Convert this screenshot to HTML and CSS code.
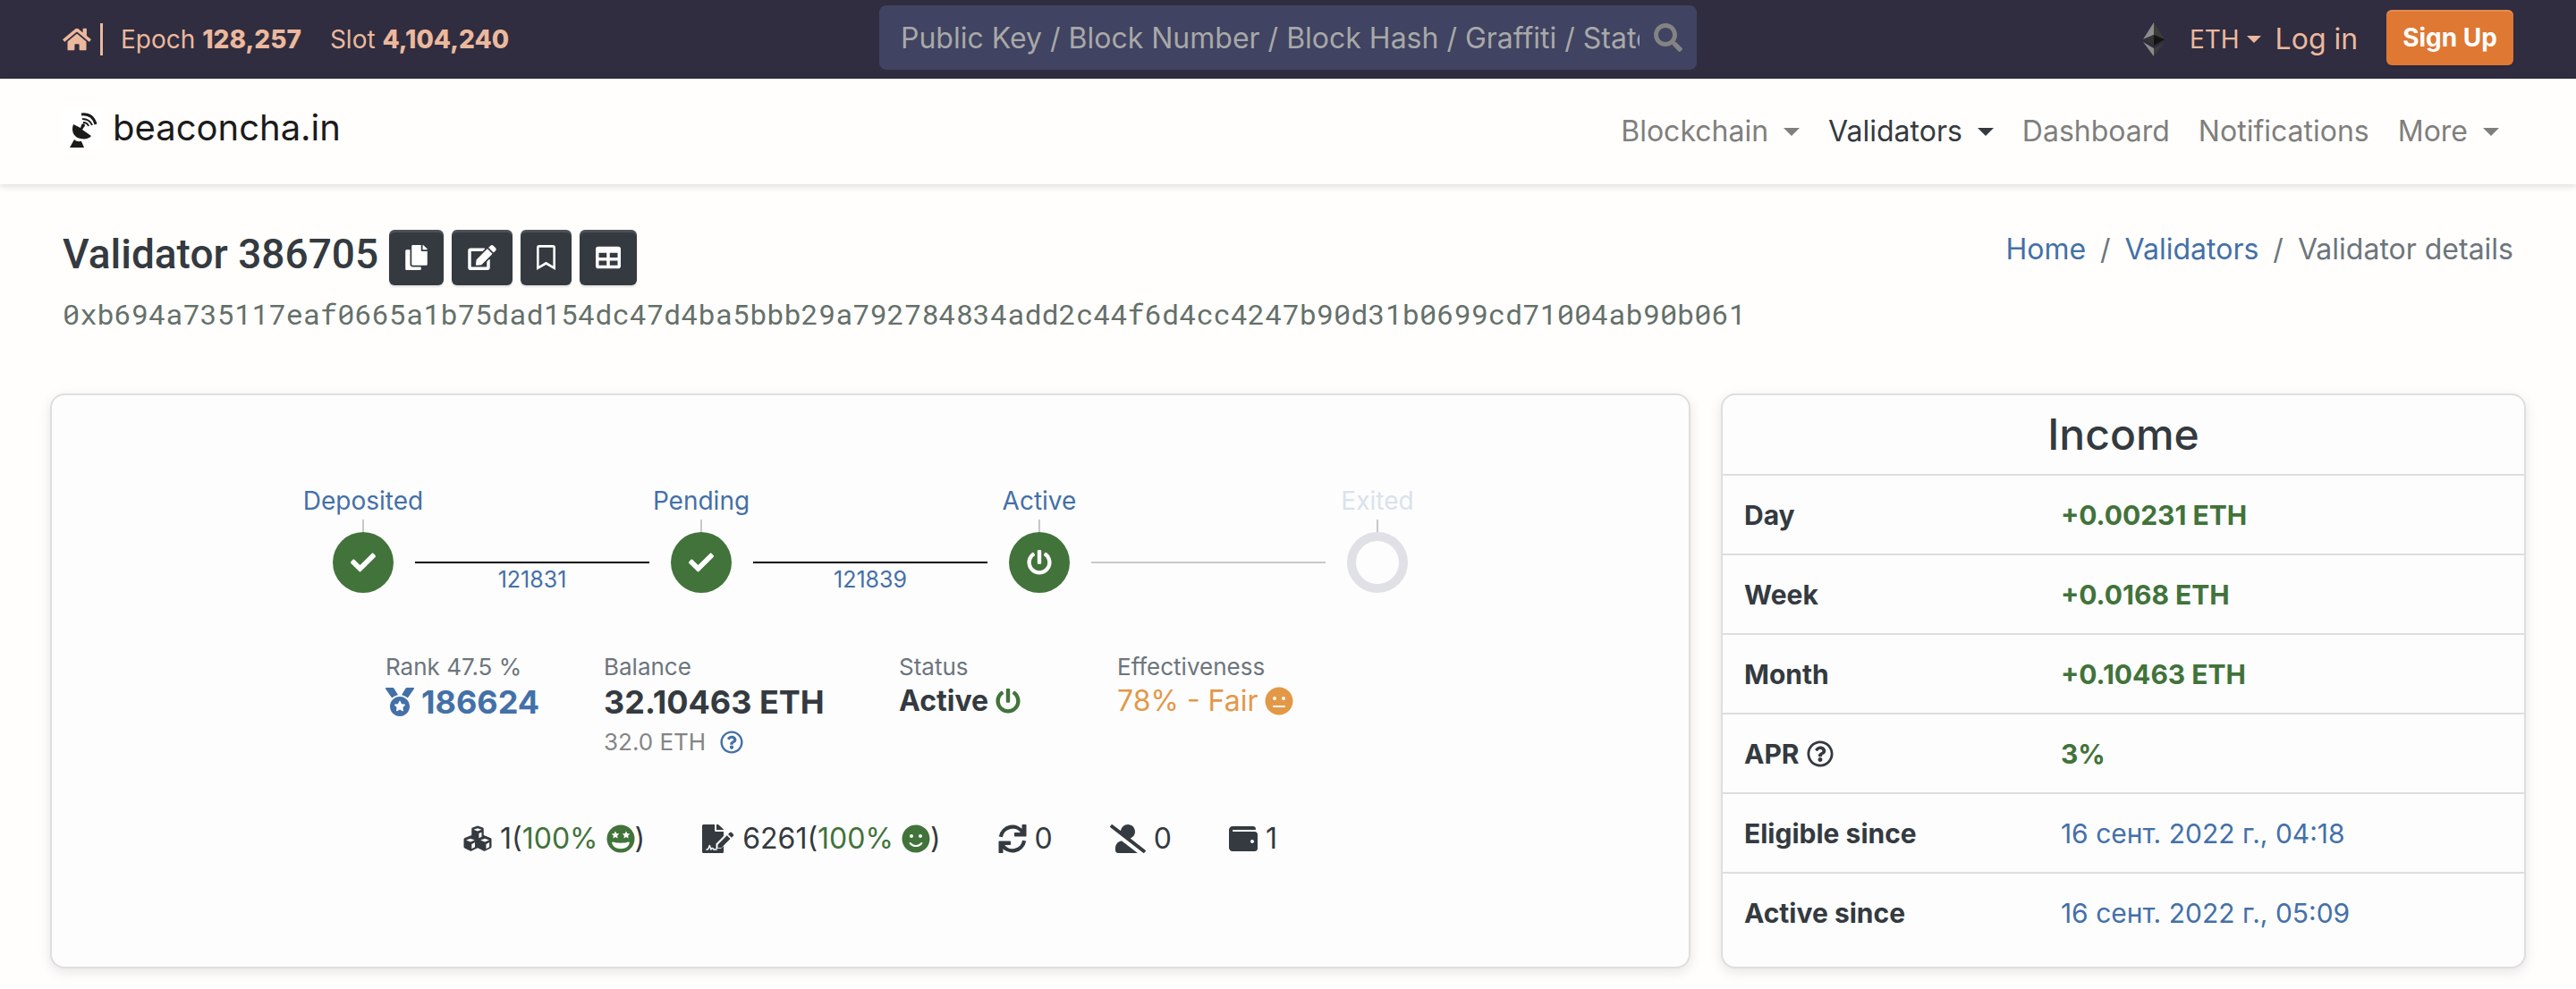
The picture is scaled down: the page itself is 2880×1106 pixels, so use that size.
FILE: index.html
```html
<!DOCTYPE html>
<html lang="en">
<head>
<meta charset="utf-8">
<title>Validator 386705 - beaconcha.in</title>
<meta name="viewport" content="width=device-width, initial-scale=1">
<link rel="stylesheet" href="styles.css">
</head>
<body>
<svg class="sprite" aria-hidden="true">
  <symbol id="i-home" viewBox="0 0 576 512"><path d="M280.37 148.26L96 300.11V464a16 16 0 0 0 16 16l112.06-.29a16 16 0 0 0 15.92-16V368a16 16 0 0 1 16-16h64a16 16 0 0 1 16 16v95.64a16 16 0 0 0 16 16.05L464 480a16 16 0 0 0 16-16V300L295.67 148.26a12.19 12.19 0 0 0-15.3 0zM571.6 251.47L488 182.56V44.05a12 12 0 0 0-12-12h-56a12 12 0 0 0-12 12v72.61L318.47 43a48 48 0 0 0-61 0L4.34 251.47a12 12 0 0 0-1.6 16.9l25.5 31A12 12 0 0 0 45.15 301l235.22-193.74a12.19 12.19 0 0 1 15.3 0L530.9 301a12 12 0 0 0 16.9-1.6l25.5-31a12 12 0 0 0-1.7-16.93z"/></symbol>
  <symbol id="i-search" viewBox="0 0 512 512"><path d="M505 442.7L405.3 343c-4.5-4.5-10.6-7-17-7H372c27.6-35.3 44-79.7 44-128C416 93.1 322.9 0 208 0S0 93.1 0 208s93.1 208 208 208c48.3 0 92.7-16.4 128-44v16.3c0 6.4 2.5 12.5 7 17l99.7 99.7c9.4 9.4 24.6 9.4 33.9 0l28.3-28.3c9.4-9.4 9.4-24.6.1-34zM208 336c-70.7 0-128-57.2-128-128 0-70.7 57.2-128 128-128 70.7 0 128 57.2 128 128 0 70.7-57.2 128-128 128z"/></symbol>
  <symbol id="i-copy" viewBox="0 0 448 512"><path d="M320 448v40c0 13.255-10.745 24-24 24H24c-13.255 0-24-10.745-24-24V120c0-13.255 10.745-24 24-24h72v296c0 30.879 25.121 56 56 56h168zm0-344V0H152c-13.255 0-24 10.745-24 24v368c0 13.255 10.745 24 24 24h272c13.255 0 24-10.745 24-24V128H344c-13.2 0-24-10.8-24-24zm120.971-31.029L375.029 7.029A24 24 0 0 0 358.059 0H352v96h96v-6.059a24 24 0 0 0-7.029-16.97z"/></symbol>
  <symbol id="i-edit" viewBox="0 0 576 512"><path d="M402.6 83.2l90.2 90.2c3.8 3.8 3.8 10 0 13.8L274.4 405.6l-92.8 10.3c-12.4 1.4-22.9-9.1-21.5-21.5l10.3-92.8L388.8 83.2c3.8-3.8 10-3.8 13.8 0zm162-22.9l-48.8-48.8c-15.2-15.2-39.9-15.2-55.2 0l-35.4 35.4c-3.8 3.8-3.8 10 0 13.8l90.2 90.2c3.8 3.8 10 3.8 13.8 0l35.4-35.4c15.2-15.3 15.2-40 0-55.2zM384 346.2V448H64V128h229.8c3.2 0 6.2-1.3 8.5-3.5l40-40c7.6-7.6 2.2-20.5-8.5-20.5H48C21.5 64 0 85.5 0 112v352c0 26.5 21.5 48 48 48h352c26.5 0 48-21.5 48-48V306.2c0-10.7-12.9-16-20.5-8.5l-40 40c-2.2 2.3-3.5 5.3-3.5 8.5z"/></symbol>
  <symbol id="i-bookmark" viewBox="0 0 384 512"><path d="M336 0H48C21.49 0 0 21.49 0 48v464l192-112 192 112V48c0-26.51-21.49-48-48-48zm0 428.43l-144-84-144 84V54a6 6 0 0 1 6-6h276c3.314 0 6 2.683 6 5.996V428.43z"/></symbol>
  <symbol id="i-table" viewBox="0 0 512 512"><path d="M464 32H48C21.49 32 0 53.49 0 80v352c0 26.51 21.49 48 48 48h416c26.51 0 48-21.49 48-48V80c0-26.51-21.49-48-48-48zM224 416H64v-96h160v96zm0-160H64v-96h160v96zm224 160H288v-96h160v96zm0-160H288v-96h160v96z"/></symbol>
  <symbol id="i-check" viewBox="0 0 512 512"><path d="M173.898 439.404l-166.4-166.4c-9.997-9.997-9.997-26.206 0-36.204l36.203-36.204c9.997-9.998 26.207-9.998 36.204 0L192 312.69 432.095 72.596c9.997-9.997 26.207-9.997 36.204 0l36.203 36.204c9.997 9.997 9.997 26.206 0 36.204l-294.4 294.401c-9.998 9.997-26.207 9.997-36.204-.001z"/></symbol>
  <symbol id="i-power" viewBox="0 0 512 512"><path d="M400 54.1c63 45 104 118.6 104 201.9 0 136.8-110.8 247.7-247.5 248C120 504.3 8.2 393 8 256.4 7.9 173.1 48.9 99.3 111.8 54.2c11.7-8.3 28-4.8 35 7.7L162.6 90c5.9 10.5 3.1 23.8-6.6 31-41.5 30.8-68 79.6-68 134.9-.1 92.3 74.5 168.1 168 168.1 91.6 0 168.6-74.2 168-169.1-.3-51.8-24.7-101.8-68.1-134-9.7-7.2-12.4-20.5-6.5-30.9l15.8-28.1c7-12.4 23.2-16.1 34.8-7.8zM296 264V24c0-13.3-10.7-24-24-24h-32c-13.3 0-24 10.7-24 24v240c0 13.3 10.7 24 24 24h32c13.3 0 24-10.7 24-24z"/></symbol>
  <symbol id="i-medal" viewBox="0 0 512 512"><path d="M223.75 130.75L154.62 15.54A31.997 31.997 0 0 0 127.18 0H16.03C3.08 0-4.5 14.57 2.92 25.18l111.27 158.96c29.72-27.77 67.52-46.83 109.56-53.39zM495.97 0H384.82c-11.24 0-21.66 5.9-27.44 15.54l-69.13 115.21c42.04 6.56 79.84 25.62 109.56 53.38L509.08 25.18C516.5 14.57 508.92 0 495.97 0zM256 160c-97.2 0-176 78.8-176 176s78.8 176 176 176 176-78.8 176-176-78.8-176-176-176zm92.52 157.26l-37.93 36.96 8.97 52.22c1.6 9.36-8.26 16.51-16.65 12.09L256 393.88l-46.9 24.65c-8.4 4.45-18.25-2.74-16.65-12.09l8.97-52.22-37.93-36.96c-6.82-6.64-3.05-18.23 6.35-19.59l52.43-7.64 23.43-47.52c2.11-4.28 6.19-6.39 10.28-6.39 4.11 0 8.22 2.14 10.33 6.39l23.43 47.52 52.43 7.64c9.4 1.36 13.17 12.95 6.35 19.59z"/></symbol>
  <symbol id="i-question" viewBox="0 0 512 512"><path d="M256 8C119.043 8 8 119.083 8 256c0 136.997 111.043 248 248 248s248-111.003 248-248C504 119.083 392.957 8 256 8zm0 448c-110.532 0-200-89.431-200-200 0-110.495 89.472-200 200-200 110.491 0 200 89.471 200 200 0 110.53-89.431 200-200 200zm107.244-255.2c0 67.052-72.421 68.084-72.421 92.863V300c0 6.627-5.373 12-12 12h-45.647c-6.627 0-12-5.373-12-12v-8.659c0-35.745 27.1-50.034 47.579-61.516 17.561-9.845 28.324-16.541 28.324-29.579 0-17.246-21.999-28.693-39.784-28.693-23.189 0-33.894 10.977-48.942 29.969-4.057 5.12-11.46 6.071-16.666 2.124l-27.824-21.098c-5.107-3.872-6.251-11.066-2.644-16.363C184.846 131.491 214.94 112 261.794 112c49.071 0 101.45 38.304 101.45 88.8zM298 368c0 23.159-18.841 42-42 42s-42-18.841-42-42 18.841-42 42-42 42 18.841 42 42z"/></symbol>
  <symbol id="i-meh" viewBox="0 0 496 512"><path d="M248 8C111 8 0 119 0 256s111 248 248 248 248-111 248-248S385 8 248 8zm-80 168c17.7 0 32 14.3 32 32s-14.3 32-32 32-32-14.3-32-32 14.3-32 32-32zm176 192H152c-21.2 0-21.2-32 0-32h192c21.2 0 21.2 32 0 32zm-16-128c-17.7 0-32-14.3-32-32s14.3-32 32-32 32 14.3 32 32-14.3 32-32 32z"/></symbol>
  <symbol id="i-smile" viewBox="0 0 496 512"><path d="M248 8C111 8 0 119 0 256s111 248 248 248 248-111 248-248S385 8 248 8zm80 168c17.7 0 32 14.3 32 32s-14.3 32-32 32-32-14.3-32-32 14.3-32 32-32zm-160 0c17.7 0 32 14.3 32 32s-14.3 32-32 32-32-14.3-32-32 14.3-32 32-32zm194.8 170.2C334.3 380.4 292.5 400 248 400s-86.3-19.6-114.8-53.8c-13.6-16.3 11-36.7 24.6-20.5 22.4 26.9 55.2 42.2 90.2 42.2s67.8-15.4 90.2-42.2c13.4-16.2 38.1 4.2 24.6 20.5z"/></symbol>
  <symbol id="i-stars" viewBox="0 0 496 512"><circle cx="248" cy="256" r="248"/><g fill="#fdfdfd"><path d="M152 118l21 42 47 7-34 33 8 47-42-22-42 22 8-47-34-33 47-7zM344 118l21 42 47 7-34 33 8 47-42-22-42 22 8-47-34-33 47-7z"/><path d="M109 312c-10-3-19 6-18 16 9 64 79 108 157 108s148-44 157-108c1-10-8-19-18-16-38 12-87 19-139 19s-101-7-139-19z"/></g></symbol>
  <symbol id="i-cubes" viewBox="0 0 512 512"><path fill-rule="evenodd" d="M256 22l92 34q16 6 16 22v114l120 46q20 8 20 26v136q0 16-15 23l-98 48q-14 6-28 0l-107-52-107 52q-14 6-28 0l-98-48q-15-7-15-23V264q0-18 20-26l120-46V78q0-16 16-22zM256 66l-72 26 72 29 72-29zM278 160v82l50-22v-80zM127 250l-78 30 78 32 78-32zM149 350v84l59-29v-84zM385 250l-78 30 78 32 78-32zM407 350v84l59-29v-84z"/></symbol>
  <symbol id="i-sign" viewBox="0 0 576 512"><path d="M24 0h200v104q0 24 24 24h136v80L248 344v88h88l48-48v104q0 24-24 24H24q-24 0-24-24V24Q0 0 24 0z"/><path d="M256 0v96h128v-8L292 4q-6-4-12-4zM280 360l164-164 60 60-164 164h-60zM464 176l32-32q16-14 32 0l30 30q14 16 0 30l-32 32z"/><path d="M70 448h20c15 0 18-8 23-22l20-50 26 72c4-30 30-30 42-8 5 8 14 8 24 8h44" fill="none" stroke="#fdfdfd" stroke-width="24" stroke-linejoin="round"/></symbol>
  <symbol id="i-sync" viewBox="0 0 512 512"><path d="M46 222A214 214 0 0 1 440 146M466 290A214 214 0 0 1 72 366" fill="none" stroke="currentColor" stroke-width="68"/><path d="M436 0h56q12 0 12 12v192q0 12-12 12H300q-12 0-12-12v-48q0-12 12-12h124V12q0-12 12-12zM76 512H20q-12 0-12-12V308q0-12 12-12h192q12 0 12 12v48q0 12-12 12H88v132q0 12-12 12z"/></symbol>
  <symbol id="i-userslash" viewBox="0 0 640 512"><path d="M633.8 458.1L362.3 248.3C412.1 230.7 448 183.8 448 128 448 57.3 390.7 0 320 0c-67.1 0-121.5 51.8-126.9 117.4L45.5 3.4C38.5-2 28.5-.8 23 6.2L3.4 31.4c-5.4 7-4.2 17 2.8 22.4l588.4 454.7c7 5.4 17 4.2 22.5-2.8l19.6-25.3c5.4-6.8 4.1-16.9-2.9-22.3zM96 422.4V464c0 26.5 21.5 48 48 48h350.2L207.4 290.3C144.2 301.3 96 356 96 422.4z"/></symbol>
  <symbol id="i-wallet" viewBox="0 0 512 512"><path d="M461.2 128H80c-8.84 0-16-7.16-16-16s7.16-16 16-16h384c8.84 0 16-7.16 16-16 0-26.51-21.49-48-48-48H64C28.65 32 0 60.65 0 96v320c0 35.35 28.65 64 64 64h397.2c28.02 0 50.8-21.53 50.8-48V176c0-26.47-22.78-48-50.8-48zM416 336c-17.67 0-32-14.33-32-32s14.33-32 32-32 32 14.33 32 32-14.33 32-32 32z"/></symbol>
</svg>

<header>
  <div class="topbar">
    <div class="network">
      <a class="home" href="#" aria-label="Home"><svg class="icon-home"><use href="#i-home"/></svg></a>
      <a href="#">Epoch <b>128,257</b></a>
      <a href="#">Slot <b>4,104,240</b></a>
    </div>
    <form class="search" role="search">
      <input type="text" aria-label="Search" placeholder="Public Key / Block Number / Block Hash / Graffiti / State Hash / Tag">
      <button type="button" aria-label="Search"><svg class="icon"><use href="#i-search"/></svg></button>
    </form>
    <div class="account">
      <svg class="eth" viewBox="0 0 24 38"><path fill="#8c8c8c" d="M12 0L0 19l12-5z"/><path fill="#3c3c3b" d="M12 0l12 19-12-5z"/><path fill="#343434" d="M0 19l12-5v12z"/><path fill="#141414" d="M24 19l-12-5v12z"/><path fill="#8c8c8c" d="M0 22l12 7v9z"/><path fill="#3c3c3b" d="M24 22l-12 7v9z"/></svg>
      <a class="currency" href="#">ETH<span class="caret caret-sm"></span></a>
      <a class="login" href="#">Log in</a>
      <button class="signup" type="button">Sign Up</button>
    </div>
  </div>
  <nav class="navbar">
    <a class="brand" href="#">
      <svg class="brand-logo" viewBox="0 0 44 44"><rect width="44" height="44" fill="#fff"/><g fill="#1b1b1a"><path d="M12 18C9 26 13 33 20 34c5 1 10 0 12-3L22 24l2-3a2 2 0 1 0-3-2l-1 3z"/><path d="M8 44l5-9c3 3 6 2 8 2l3 7z"/></g><g fill="none" stroke="#1b1b1a" stroke-width="2"><path d="M21 7c9-1 14 4 16 11" stroke-width="3"/><path d="M22 12c6 0 9 2 11 7"/><path d="M23 16c3 0 5 1 6 4"/></g></svg>
      <span>beaconcha.in</span>
    </a>
    <div class="menu">
      <a href="#">Blockchain<span class="caret"></span></a>
      <a class="active" href="#">Validators<span class="caret"></span></a>
      <a href="#">Dashboard</a>
      <a href="#">Notifications</a>
      <a href="#">More<span class="caret"></span></a>
    </div>
  </nav>
</header>

<main>
  <div class="heading">
    <div class="title-row">
      <h1>Validator 386705</h1>
      <div class="actions">
        <button type="button" aria-label="Copy public key"><svg class="w25"><use href="#i-copy"/></svg></button>
        <button type="button" aria-label="Edit name"><svg class="w32"><use href="#i-edit"/></svg></button>
        <button type="button" aria-label="Bookmark"><svg class="w21"><use href="#i-bookmark"/></svg></button>
        <button type="button" aria-label="Add to dashboard"><svg class="w28"><use href="#i-table"/></svg></button>
      </div>
      <nav class="crumbs" aria-label="breadcrumb">
        <a href="#">Home</a><span>/</span><a href="#">Validators</a><span>/</span><span>Validator details</span>
      </nav>
    </div>
    <p class="pubkey">0xb694a735117eaf0665a1b75dad154dc47d4ba5bbb29a792784834add2c44f6d4cc4247b90d31b0699cd71004ab90b061</p>
  </div>

  <div class="cards">
    <section class="card overview">
      <div class="progress">
        <div class="step"><a href="#">Deposited</a><i class="stem"></i><span class="dot"><svg class="w28"><use href="#i-check"/></svg></span></div>
        <div class="link"><a href="#">121831</a></div>
        <div class="step"><a href="#">Pending</a><i class="stem"></i><span class="dot"><svg class="w28"><use href="#i-check"/></svg></span></div>
        <div class="link"><a href="#">121839</a></div>
        <div class="step"><a href="#">Active</a><i class="stem"></i><span class="dot"><svg class="w28"><use href="#i-power"/></svg></span></div>
        <div class="link idle"></div>
        <div class="step idle"><a href="#">Exited</a><i class="stem"></i><span class="dot"></span></div>
      </div>

      <div class="stats">
        <div><small>Rank 47.5 %</small><a class="value large" href="#"><svg class="icon"><use href="#i-medal"/></svg>186624</a></div>
        <div><small>Balance</small><span class="value large">32.10463 ETH</span><span class="sub">32.0 ETH<a href="#" aria-label="Effective balance"><svg class="w26"><use href="#i-question"/></svg></a></span></div>
        <div><small>Status</small><span class="value">Active<svg class="w28 good"><use href="#i-power"/></svg></span></div>
        <div><small>Effectiveness</small><span class="value fair">78% - Fair<svg class="icon"><use href="#i-meh"/></svg></span></div>
      </div>

      <div class="counts">
        <span><svg class="icon"><use href="#i-cubes"/></svg><span>1(<span class="good">100% <svg class="icon inline"><use href="#i-stars"/></svg></span>)</span></span>
        <span><svg class="w36"><use href="#i-sign"/></svg><span>6261(<span class="good">100% <svg class="icon inline"><use href="#i-smile"/></svg></span>)</span></span>
        <span><svg class="icon"><use href="#i-sync"/></svg>0</span>
        <span><svg class="w40"><use href="#i-userslash"/></svg>0</span>
        <span><svg class="icon"><use href="#i-wallet"/></svg>1</span>
      </div>
    </section>

    <section class="card income">
      <h2>Income</h2>
      <table>
        <tbody>
          <tr><th scope="row">Day</th><td><b>+0.00231 ETH</b></td></tr>
          <tr><th scope="row">Week</th><td><b>+0.0168 ETH</b></td></tr>
          <tr><th scope="row">Month</th><td><b>+0.10463 ETH</b></td></tr>
          <tr><th scope="row"><span class="apr">APR<svg class="w30"><use href="#i-question"/></svg></span></th><td><b>3%</b></td></tr>
          <tr><th scope="row">Eligible since</th><td><a href="#">16 сент. 2022 г., 04:18</a></td></tr>
          <tr><th scope="row">Active since</th><td><a href="#">16 сент. 2022 г., 05:09</a></td></tr>
        </tbody>
      </table>
    </section>
  </div>
</main>
</body>
</html>
```
FILE: styles.css
```css
:root {
  --ink: #343a40;
  --link: #4470a8;
  --good: #41733a;
  --peach: #ecb89d;
  --line: #dedede;
}

* { box-sizing: border-box; }

body {
  margin: 0;
  background: #fffefc;
  color: var(--ink);
  font: 32px/48px Inter, "Liberation Sans", sans-serif;
}

a { color: var(--link); text-decoration: none; }
b { font-weight: 700; }
h1, h2, p { margin: 0; }
button { border: 0; font-family: inherit; cursor: pointer; }
svg { display: block; flex: none; fill: currentColor; }

.sprite { position: absolute; width: 0; height: 0; }
.icon { width: 32px; height: 32px; }
.icon-home { width: 32px; height: 28px; }
.w21 { width: 21px; height: 28px; }
.w25 { width: 25px; height: 28px; }
.w26 { width: 26px; height: 26px; }
.w28 { width: 28px; height: 28px; }
.w30 { width: 30px; height: 30px; }
.w32 { width: 32px; height: 28px; }
.w36 { width: 36px; height: 32px; }
.w40 { width: 40px; height: 32px; }
.inline { display: inline-block; vertical-align: -5px; }
.good { color: var(--good); }

/* Top bar */
.topbar {
  display: grid;
  grid-template-columns: 1fr 914px 1fr;
  align-items: center;
  min-height: 88px;
  padding: 0 70px;
  background: #2f2d3f;
}
.topbar a { color: var(--peach); }
.network { display: flex; align-items: center; gap: 32px; font-size: 28px; }
.network b { font-weight: 800; }
.home {
  margin-right: -12px;
  padding: 4px 10px 4px 0;
  border-right: 3px solid var(--peach);
}
.search { position: relative; padding-bottom: 4px; }
.search input {
  display: block;
  width: 100%;
  height: 72px;
  padding: 0 64px 0 24px;
  border: 0;
  border-radius: 8px;
  background: #404361;
  color: #fff;
  font: inherit;
}
.search input::placeholder { color: #a8a8a8; opacity: 1; }
.search button {
  position: absolute;
  top: 20px;
  right: 16px;
  padding: 0;
  background: none;
  color: #838383;
}
.account { display: flex; align-items: center; justify-content: flex-end; }
.eth { width: 24px; height: 38px; margin-right: 28px; }
.currency { display: flex; align-items: center; font-size: 28px; margin-right: 16px; }
.login { margin-right: 32px; }
.signup {
  height: 62px;
  margin-bottom: 4px;
  padding: 0 18px;
  border-radius: 6px;
  background: #de7833;
  box-shadow: inset 0 2px 0 rgba(255, 255, 255, .15), 0 2px 2px rgba(0, 0, 0, .1);
  color: #fff;
  font-size: 28px;
  font-weight: 700;
}
.caret {
  margin-left: 17px;
  border: 9px solid transparent;
  border-top-color: currentColor;
  border-bottom: 0;
}
.caret-sm { margin-left: 8px; border-width: 8px; border-bottom: 0; }

/* Main navigation */
.navbar {
  display: flex;
  align-items: center;
  justify-content: space-between;
  min-height: 118px;
  padding: 0 70px;
  box-shadow: 0 2px 8px rgba(0, 0, 0, .14);
}
.brand { display: flex; align-items: center; gap: 12px; padding-bottom: 8px; color: #1b1b1a; font-size: 40px; }
.brand-logo { width: 44px; height: 44px; }
.menu { display: flex; gap: 32px; padding-right: 16px; }
.menu a { display: flex; align-items: center; color: #7f7f7e; }
.menu .active { color: var(--ink); }

/* Page heading */
main { padding: 48px 56px 24px; }
.heading { padding: 0 14px; }
.title-row { display: flex; align-items: center; gap: 12px; }
h1 { padding-bottom: 6px; font: 500 46px/58px Roboto, sans-serif; }
.actions { display: flex; align-items: center; gap: 9px; padding-top: 3px; }
.actions button {
  display: flex;
  align-items: center;
  height: 62px;
  padding: 0 18px;
  border-radius: 6px;
  background: #343a40;
  box-shadow: inset 0 3px 0 rgba(255, 255, 255, .12), 0 2px 2px rgba(0, 0, 0, .12);
  color: #fff;
}
.crumbs { display: flex; gap: 16px; margin: 0 0 16px auto; color: #6c757d; }
.pubkey {
  margin-top: 8px;
  overflow-wrap: anywhere;
  color: #64706a;
  font: 32px/48px "Roboto Mono", "DejaVu Sans Mono", monospace;
}

/* Cards */
.cards {
  display: grid;
  grid-template-columns: minmax(0, 1834fr) minmax(0, 900fr);
  gap: 34px;
  margin-top: 65px;
}
.card {
  border: 2px solid var(--line);
  border-radius: 16px;
  background: #fdfdfd;
  box-shadow: 0 4px 14px rgba(0, 0, 0, .1);
}

/* Validator life cycle */
.overview { display: flex; flex-direction: column; align-items: center; padding-top: 95px; }
.progress { display: grid; grid-template-columns: 116px 262px 116px 262px 116px 262px 116px; }
.step { display: flex; flex-direction: column; align-items: center; }
.step a { padding-top: 2px; font-size: 28px; line-height: 42px; white-space: nowrap; }
.stem { width: 2px; height: 16px; margin-bottom: -2px; background: #c8c8c8; }
.dot {
  display: flex;
  align-items: center;
  justify-content: center;
  width: 68px;
  height: 68px;
  border-radius: 50%;
  background: var(--good);
  color: #fff;
}
.step.idle a { color: #d9e2ee; }
.step.idle .dot { border: 10px solid #e0e1e7; background: none; }
.link { margin-top: 91px; border-top: 2px solid #000; text-align: center; font-size: 25px; line-height: 36px; }
.link.idle { border-color: #c8c8c8; }

/* Key figures */
.stats { display: grid; grid-template-columns: 244px 330px 244px 266px; margin-top: 62px; line-height: 40px; }
.stats > div { display: flex; flex-direction: column; }
.stats small { color: #6c757d; font-size: 26px; line-height: 36px; }
.value { display: flex; align-items: center; gap: 8px; font-weight: 700; }
.value.large { font-size: 36px; line-height: 42px; }
.value.fair { color: #e39847; font-weight: 400; }
.sub { display: flex; align-items: center; gap: 16px; margin-top: 4px; color: #858585; font-size: 26px; }

.counts { display: flex; gap: 64px; margin-top: 64px; }
.counts > span { display: flex; align-items: center; gap: 9px; }

/* Income */
.income { padding-bottom: 16px; }
.income h2 { padding: 15px 0; text-align: center; font-size: 48px; font-weight: 500; line-height: 58px; }
table { width: 100%; border-collapse: collapse; font-size: 30px; line-height: 40px; }
th, td { height: 89px; padding: 0 24px; border-top: 2px solid var(--line); text-align: left; }
th { width: 39.5%; font-weight: 700; }
td b { color: var(--good); }
.apr { display: flex; align-items: center; gap: 8px; }
```
